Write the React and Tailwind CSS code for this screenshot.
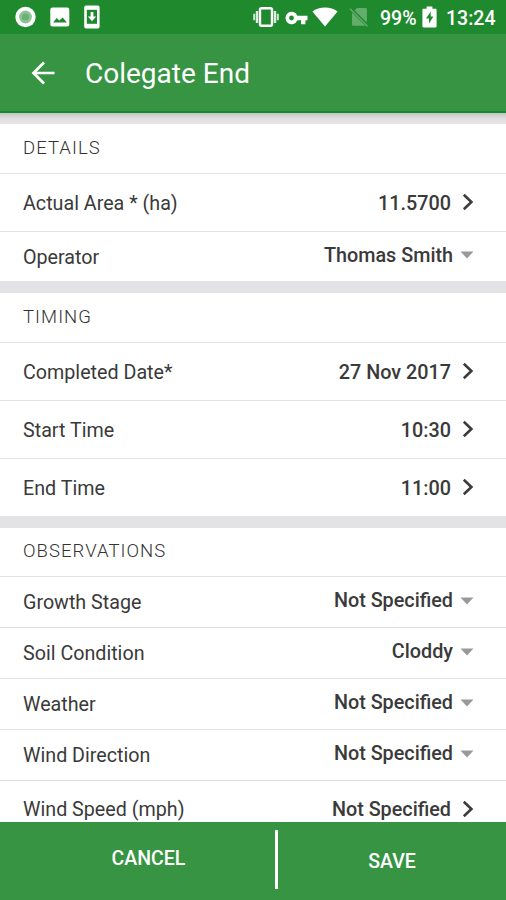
/**
 * App.jsx — Field job details form (area, timing, observations)
 */

const SECTIONS = [
  {
    title: 'DETAILS',
    rows: [
      { label: 'Actual Area * (ha)', value: '11.5700', type: 'link' },
      { label: 'Operator', value: 'Thomas Smith', type: 'select', size: 'h-[49px]' },
    ],
  },
  {
    title: 'TIMING',
    rows: [
      { label: 'Completed Date*', value: '27 Nov 2017', type: 'link' },
      { label: 'Start Time', value: '10:30', type: 'link' },
      { label: 'End Time', value: '11:00', type: 'link', size: 'h-[57px]' },
    ],
  },
  {
    title: 'OBSERVATIONS',
    headSize: 'h-[49px]',
    rows: [
      { label: 'Growth Stage', value: 'Not Specified', type: 'select' },
      { label: 'Soil Condition', value: 'Cloddy', type: 'select' },
      { label: 'Weather', value: 'Not Specified', type: 'select' },
      { label: 'Wind Direction', value: 'Not Specified', type: 'select' },
      { label: 'Wind Speed (mph)', value: 'Not Specified', type: 'link', size: 'h-[56px]' },
    ],
  },
];

function StatusBar() {
  return (
    <div className="h-[34px] shrink-0 bg-[#1f892e] flex items-center justify-between pl-[15px] pr-[10px] text-white">
      <div className="flex items-center gap-[13px]">
        <svg width="21" height="22" viewBox="0 0 21 22">
          <circle cx="10.5" cy="11" r="10.2" fill="#fff" />
          <circle cx="10.5" cy="11" r="6.4" fill="#8cc494" />
          <circle cx="10.5" cy="11" r="3.6" fill="#6bb175" />
        </svg>
        <svg width="20" height="20" viewBox="0 0 20 20" className="ml-[1px]">
          <rect x="0.3" y="0.5" width="19" height="19" rx="2.2" fill="#fff" />
          <path d="M3.5 15.6V15l3.2-4 2.6 2.6 3.4-3.2 3.8 4.6v.6z" fill="#1f892e" />
        </svg>
        <svg width="18" height="24" viewBox="0 0 18 24">
          <rect x="1.2" y="0.5" width="15.4" height="23" rx="2" fill="#fff" />
          <path d="M3.8 4.8h10.2v14H3.8z" fill="#1f892e" />
          <path d="M7.6 7h2.8v4.4h2.7L9 16.3l-4.1-4.9h2.7z" fill="#fff" />
        </svg>
      </div>

      <div className="flex items-center">
        <svg width="26" height="20" viewBox="0 0 26 20">
          <rect x="7" y="1.2" width="12" height="17.6" rx="1.6" fill="none" stroke="#fff" strokeWidth="2.4" />
          <path d="M4 4v12M22 4v12" stroke="#fff" strokeWidth="2.4" opacity="0.85" />
          <path d="M1.2 6.8v6.4M24.8 6.8v6.4" stroke="#fff" strokeWidth="2" opacity="0.8" />
        </svg>
        <svg width="23" height="14" viewBox="0 0 23 14" className="ml-[6px] mt-[1px]">
          <path
            fillRule="evenodd"
            d="M12.4 4.7A6.2 6.2 0 1 0 12.4 9.3H16v4h4.4v-4H22.5V4.7zM6.5 4.6a2.4 2.4 0 1 1 0 4.8 2.4 2.4 0 0 1 0-4.8z"
            fill="#fff"
          />
        </svg>
        <svg width="26" height="20" viewBox="0 0 26 20" className="ml-[4px]">
          <path d="M0.4 4.4C7 -0.9 19 -0.9 25.6 4.4L13 19.6z" fill="#fff" />
        </svg>
        <svg width="20" height="20" viewBox="0 0 20 20" className="ml-[11px]">
          <path d="M8 1h8.5c.8 0 1.4.6 1.4 1.4v13.2L5.5 3.4zM3 5.6l13.4 13.2H4.4c-.8 0-1.4-.6-1.4-1.4z" fill="#62ac6c" />
          <path d="M1 1.8 18.5 19.2" stroke="#62ac6c" strokeWidth="1.5" />
        </svg>
        <span className="ml-[11px] w-[37px] text-[19.5px] leading-none font-medium whitespace-nowrap mt-[4px]">99%</span>
        <svg width="15" height="22" viewBox="0 0 15 22" className="ml-[5px]">
          <path d="M4.6 0.5h5.8v2.2h3c.7 0 1.2.5 1.2 1.2v16.4c0 .7-.5 1.2-1.2 1.2H1.6c-.7 0-1.2-.5-1.2-1.2V3.9c0-.7.5-1.2 1.2-1.2h3z" fill="#fff" />
          <path d="M8.7 5.4 4 12.6h3v5l4.4-7H8.7z" fill="#1f892e" />
        </svg>
        <span className="ml-[9px] w-[50px] text-[19.5px] leading-none font-medium whitespace-nowrap mt-[4px]">13:24</span>
      </div>
    </div>
  );
}

function AppBar({ title }) {
  return (
    <div className="h-[79px] shrink-0 bg-[#369443] border-b-2 border-[#168a2a] flex items-center pl-[31px]">
      <svg width="25" height="24" viewBox="0 0 25 24" className="mt-[1px]" fill="none" stroke="#fff" strokeWidth="2.7">
        <path d="M23.5 12H2.5M13 1.5 2.5 12 13 22.5" />
      </svg>
      <h1 className="ml-[29px] mt-[2px] text-[28px] leading-none text-white">{title}</h1>
    </div>
  );
}

function Row({ label, value, type, size }) {
  const isLink = type === 'link';
  const height = size || (isLink ? 'h-[58px]' : 'h-[51px]');
  return (
    <div className={`${height} shrink-0 flex items-center justify-between pl-[23px] pr-[32px] border-b border-[#e2e2e3] last:border-b-0`}>
      <span className="pt-[2px] text-[19.7px] leading-none text-[#3a3a3a]">{label}</span>
      {isLink ? (
        <span className="flex items-center text-[19.8px] leading-none font-medium text-[#3a3a3a]">
          <span className="pt-[2px]">{value}</span>
          <svg width="12" height="18" viewBox="0 0 12 18" className="ml-[11px]" fill="none" stroke="#3c3c3c" strokeWidth="2.6">
            <path d="M1.8 1.8 9.4 9l-7.6 7.2" />
          </svg>
        </span>
      ) : (
        <span className="flex items-center pb-[3px] text-[19.8px] leading-none font-medium text-[#3a3a3a]">
          <span className="pt-[1px]">{value}</span>
          <svg width="14" height="8" viewBox="0 0 14 8" className="ml-[7px] mt-[1px]">
            <path d="M0.5 0.5h13L7 7.5z" fill="#999" />
          </svg>
        </span>
      )}
    </div>
  );
}

function Section({ title, headSize = 'h-[50px]', rows }) {
  return (
    <section className="shrink-0 bg-white flex flex-col">
      <h2 className={`${headSize} pb-[1px] pl-[23px] flex items-center border-b border-[#e2e2e3] text-[18.5px] leading-none font-light text-[#333] tracking-[1.05px]`}>
        {title}
      </h2>
      {rows.map((row) => (
        <Row key={row.label} {...row} />
      ))}
    </section>
  );
}

export default function App() {
  return (
    <div className="w-full h-[900px] flex flex-col overflow-hidden bg-[#e3e3e5] font-[Roboto,sans-serif]">
      <StatusBar />
      <AppBar title="Colegate End" />
      <div className="h-[11px] shrink-0 bg-linear-to-b from-[#c4c4c6] via-[#dededf] to-[#e6e6e8]" />

      <main className="flex-1 min-h-0 overflow-hidden flex flex-col gap-[12px]">
        {SECTIONS.map((section) => (
          <Section key={section.title} {...section} />
        ))}
      </main>

      <footer className="h-[78px] shrink-0 bg-[#369443] flex items-center text-white text-[19.5px] leading-none font-medium">
        <button className="w-[275px] pl-[22px] pb-[5px] text-center">CANCEL</button>
        <div className="w-[3px] h-[59px] mb-[4px] bg-white" />
        <button className="flex-1 pt-[2px] text-center">SAVE</button>
      </footer>
    </div>
  );
}
